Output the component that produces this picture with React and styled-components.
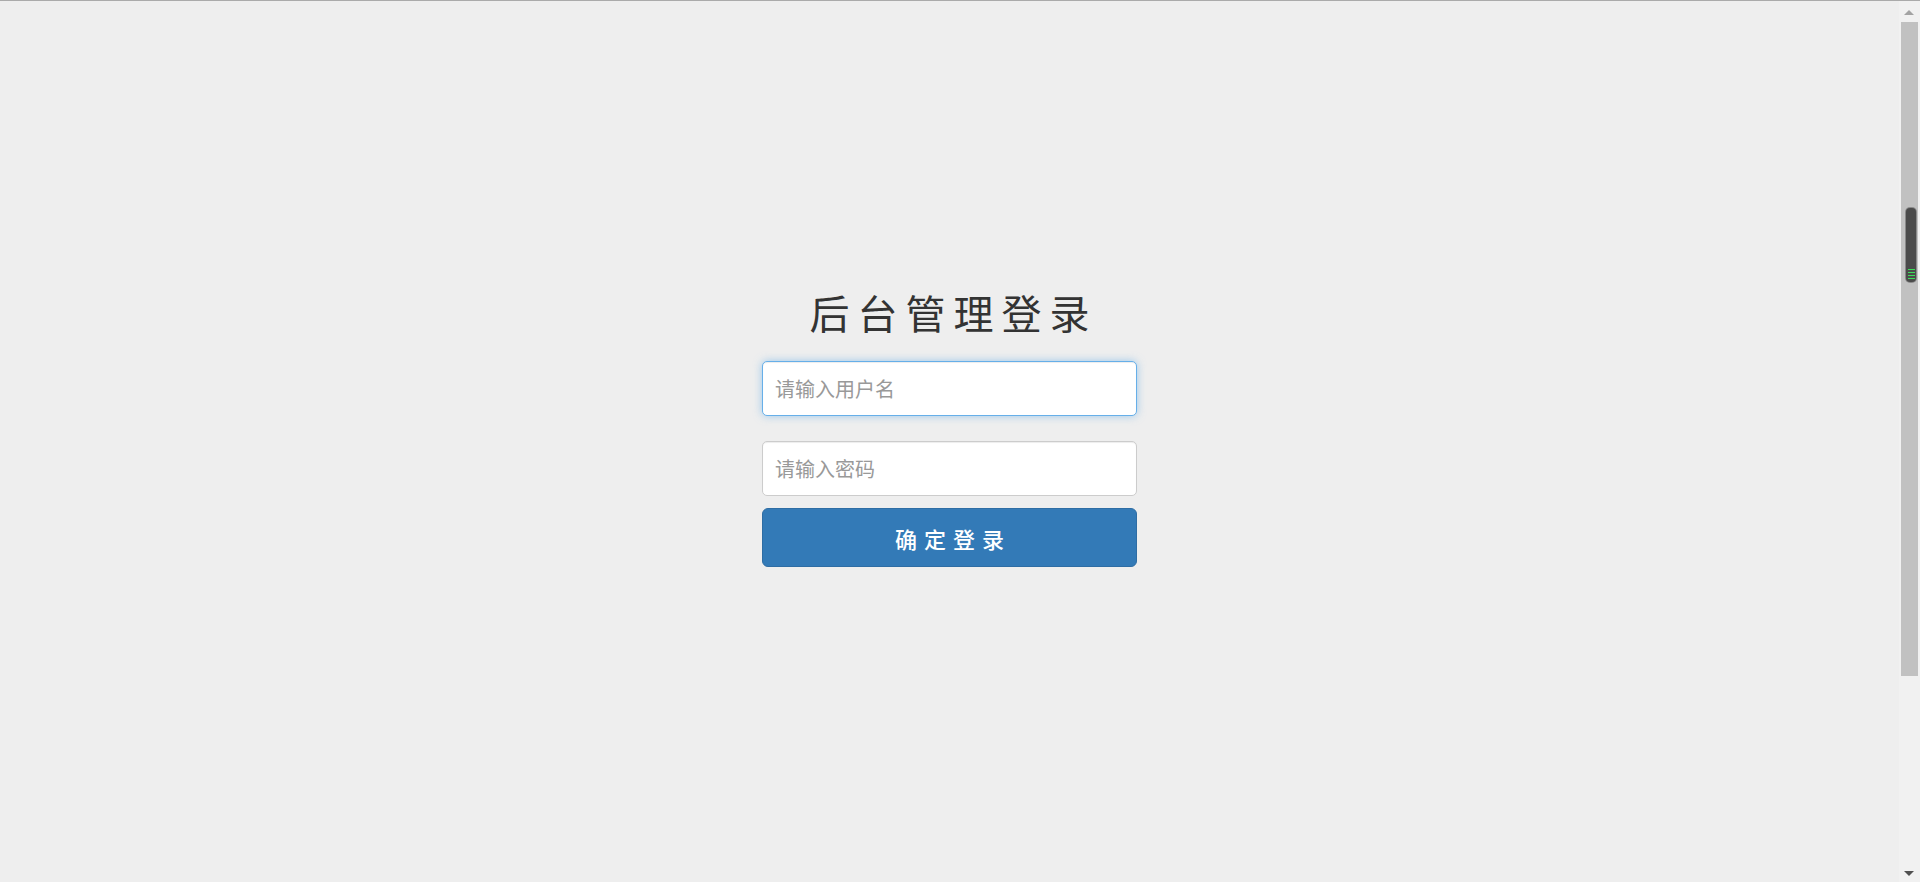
import React from "react";
import styled, { createGlobalStyle } from "styled-components";

const GlobalStyle = createGlobalStyle`
  html, body {
    margin: 0;
    padding: 0;
    height: 100%;
    overflow: hidden;
  }
  body {
    background-color: #eeeeee;
    font-family: "Helvetica Neue", "Liberation Sans", "Noto Sans CJK SC", sans-serif;
    border-top: 1px solid #aaaaaa;
    box-sizing: border-box;
  }
  * {
    box-sizing: border-box;
  }
`;

const Page = styled.div`
  min-height: 881px;
  display: flex;
  justify-content: center;
  padding-top: 281px;
  padding-right: 21px;
`;

const LoginForm = styled.form`
  width: 375px;
  display: flex;
  flex-direction: column;
`;

const Title = styled.h2`
  margin: 0 0 19px 8px;
  font-size: 40px;
  font-weight: 400;
  line-height: 60px;
  letter-spacing: 8px;
  text-align: center;
  color: #333333;
  font-family: "Noto Sans CJK SC", sans-serif;
`;

const Input = styled.input`
  width: 100%;
  height: 55px;
  padding: 0 12px;
  margin-bottom: ${props => props.$gap}px;
  font-size: 20px;
  font-family: "Noto Sans CJK SC", sans-serif;
  color: #555555;
  background-color: #ffffff;
  border: 1px solid ${props => (props.$focused ? "#66afe9" : "#cccccc")};
  border-radius: 5px;
  outline: none;
  box-shadow: ${props =>
    props.$focused
      ? "inset 0 1px 1px rgba(0,0,0,.075), 0 0 8px rgba(102,175,233,.6)"
      : "inset 0 1px 1px rgba(0,0,0,.075)"};

  &::placeholder {
    color: #999999;
  }
`;

const SubmitButton = styled.button`
  width: 100%;
  height: 59px;
  font-size: 22px;
  font-weight: 500;
  font-family: "Noto Sans CJK SC", sans-serif;
  letter-spacing: 7px;
  padding-left: 13px;
  color: #ffffff;
  background-color: #337ab7;
  border: 1px solid #2e6da4;
  border-radius: 6px;
  cursor: pointer;
`;

/* fake browser scrollbar lying over the right edge */
const ScrollBar = styled.div`
  position: fixed;
  top: 1px;
  right: 0;
  width: 21px;
  bottom: 0;
  background-color: #f1f1f1;
`;

const Arrow = styled.div`
  position: absolute;
  left: 5px;
  width: 0;
  height: 0;
  border-left: 5px solid transparent;
  border-right: 5px solid transparent;
  ${props =>
    props.$down
      ? "bottom: 6px; border-top: 5px solid #505050;"
      : "top: 9px; border-bottom: 5px solid #a3a3a3;"}
`;

const Track = styled.div`
  position: absolute;
  top: 21px;
  left: 2px;
  width: 17px;
  height: 654px;
  background-color: #c1c1c1;
`;

const Thumb = styled.div`
  position: absolute;
  top: 186px;
  left: 5px;
  width: 10px;
  height: 74px;
  border-radius: 4px;
  background-color: #4b4b4b;
  box-shadow: 0 0 0 1px #8a8a8a;
  display: flex;
  flex-direction: column;
  justify-content: flex-end;
  align-items: center;
  gap: 2px;
  padding-bottom: 3px;
`;

const Grip = styled.span`
  display: block;
  width: 7px;
  height: 1px;
  background-color: #3ddc5a;
`;

export default function App() {
  return (
    <>
      <GlobalStyle />
      <Page>
        <LoginForm onSubmit={e => e.preventDefault()}>
          <Title>后台管理登录</Title>
          <Input type="text" placeholder="请输入用户名" $focused $gap={25} autoFocus />
          <Input type="password" placeholder="请输入密码" $gap={12} />
          <SubmitButton type="submit">确定登录</SubmitButton>
        </LoginForm>
      </Page>
      <ScrollBar>
        <Arrow />
        <Track>
          <Thumb>
            <Grip />
            <Grip />
            <Grip />
            <Grip />
          </Thumb>
        </Track>
        <Arrow $down />
      </ScrollBar>
    </>
  );
}
